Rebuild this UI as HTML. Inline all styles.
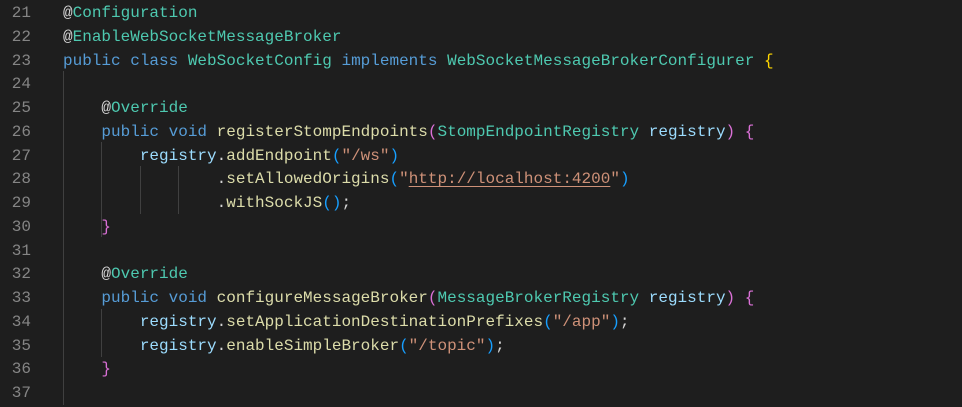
<!DOCTYPE html>
<html><head><style>
body{margin:0;background:#1e1e1e;width:962px;height:405px;overflow:hidden;font-family:"Liberation Mono",monospace;font-size:16px;}
.l{position:absolute;left:0;height:23.75px;line-height:23.75px;white-space:pre;color:#d4d4d4;width:962px}
.n{position:absolute;left:0;width:31px;text-align:right;color:#858585}
.c{position:absolute;left:63px}
.k{color:#569cd6}.t{color:#4ec9b0}.m{color:#dcdcaa}.v{color:#9cdcfe}.s{color:#ce9178}
.g{color:#ffd700}.p{color:#da70d6}.b{color:#179fff}
.u{text-decoration:underline;text-underline-offset:3px}
.ig{position:absolute;width:1px;background:#404040}
#w{position:absolute;left:0;top:2px;width:962px;height:405px}
</style></head><body>
<div class="ig" style="left:63px;top:71px;height:334px"></div>
<div class="ig" style="left:101px;top:142px;height:95px"></div>
<div class="ig" style="left:101px;top:309px;height:48px"></div>
<div class="ig" style="left:140px;top:166px;height:48px"></div>
<div class="ig" style="left:178px;top:166px;height:48px"></div>
<div id="w">
<div class="l" style="top:0"><span class="n">21</span><span class="c">@<span class="t">Configuration</span></span></div>
<div class="l" style="top:23.75px"><span class="n">22</span><span class="c">@<span class="t">EnableWebSocketMessageBroker</span></span></div>
<div class="l" style="top:47.5px"><span class="n">23</span><span class="c"><span class="k">public class</span> <span class="t">WebSocketConfig</span> <span class="k">implements</span> <span class="t">WebSocketMessageBrokerConfigurer</span> <span class="g">{</span></span></div>
<div class="l" style="top:71.25px"><span class="n">24</span></div>
<div class="l" style="top:95px"><span class="n">25</span><span class="c">    @<span class="t">Override</span></span></div>
<div class="l" style="top:118.75px"><span class="n">26</span><span class="c">    <span class="k">public void</span> <span class="m">registerStompEndpoints</span><span class="p">(</span><span class="t">StompEndpointRegistry</span> <span class="v">registry</span><span class="p">)</span> <span class="p">{</span></span></div>
<div class="l" style="top:142.5px"><span class="n">27</span><span class="c">        <span class="v">registry</span>.<span class="m">addEndpoint</span><span class="b">(</span><span class="s">"/ws"</span><span class="b">)</span></span></div>
<div class="l" style="top:166.25px"><span class="n">28</span><span class="c">                .<span class="m">setAllowedOrigins</span><span class="b">(</span><span class="s">"<span class="u">http://localhost:4200</span>"</span><span class="b">)</span></span></div>
<div class="l" style="top:190px"><span class="n">29</span><span class="c">                .<span class="m">withSockJS</span><span class="b">()</span>;</span></div>
<div class="l" style="top:213.75px"><span class="n">30</span><span class="c">    <span class="p">}</span></span></div>
<div class="l" style="top:237.5px"><span class="n">31</span></div>
<div class="l" style="top:261.25px"><span class="n">32</span><span class="c">    @<span class="t">Override</span></span></div>
<div class="l" style="top:285px"><span class="n">33</span><span class="c">    <span class="k">public void</span> <span class="m">configureMessageBroker</span><span class="p">(</span><span class="t">MessageBrokerRegistry</span> <span class="v">registry</span><span class="p">)</span> <span class="p">{</span></span></div>
<div class="l" style="top:308.75px"><span class="n">34</span><span class="c">        <span class="v">registry</span>.<span class="m">setApplicationDestinationPrefixes</span><span class="b">(</span><span class="s">"/app"</span><span class="b">)</span>;</span></div>
<div class="l" style="top:332.5px"><span class="n">35</span><span class="c">        <span class="v">registry</span>.<span class="m">enableSimpleBroker</span><span class="b">(</span><span class="s">"/topic"</span><span class="b">)</span>;</span></div>
<div class="l" style="top:356.25px"><span class="n">36</span><span class="c">    <span class="p">}</span></span></div>
<div class="l" style="top:380px"><span class="n">37</span></div>
</div>
</body></html>
